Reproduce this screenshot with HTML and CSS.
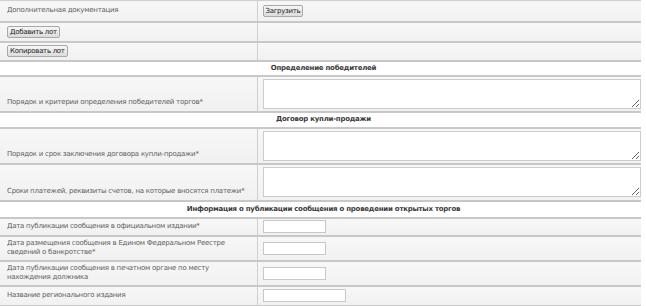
FILE: index.html
```html
<!DOCTYPE html>
<html lang="ru">
<head>
<meta charset="utf-8">
<title>Лот</title>
<link rel="stylesheet" href="styles.css">
</head>
<body>
<table class="form">
  <colgroup><col class="c-label"><col class="c-field"></colgroup>
  <tr class="row h21">
    <td class="label mid">Дополнительная документация</td>
    <td class="field mid"><button class="btn">Загрузить</button></td>
  </tr>
  <tr class="row h20">
    <td class="label mid"><button class="btn">Добавить лот</button></td>
    <td class="field"></td>
  </tr>
  <tr class="row h19">
    <td class="label mid"><button class="btn">Копировать лот</button></td>
    <td class="field"></td>
  </tr>
  <tr class="head h15"><td colspan="2">Определение победителей</td></tr>
  <tr class="row h36">
    <td class="label">Порядок и критерии определения победителей торгов*</td>
    <td class="field top"><textarea class="area"></textarea></td>
  </tr>
  <tr class="head h16"><td colspan="2">Договор купли-продажи</td></tr>
  <tr class="row h36">
    <td class="label">Порядок и срок заключения договора купли-продажи*</td>
    <td class="field top"><textarea class="area"></textarea></td>
  </tr>
  <tr class="row h37">
    <td class="label">Сроки платежей, реквизиты счетов, на которые вносятся платежи*</td>
    <td class="field top"><textarea class="area"></textarea></td>
  </tr>
  <tr class="head h17"><td colspan="2">Информация о публикации сообщения о проведении открытых торгов</td></tr>
  <tr class="row h18">
    <td class="label mid">Дата публикации сообщения в официальном издании*</td>
    <td class="field mid"><input class="inp" type="text"></td>
  </tr>
  <tr class="row h25">
    <td class="label mid narrow">Дата размещения сообщения в Едином Федеральном Реестре сведений о банкротстве*</td>
    <td class="field mid"><input class="inp" type="text"></td>
  </tr>
  <tr class="row h25">
    <td class="label mid narrow">Дата публикации сообщения в печатном органе по месту нахождения должника</td>
    <td class="field mid"><input class="inp" type="text"></td>
  </tr>
  <tr class="row h20">
    <td class="label mid">Название регионального издания</td>
    <td class="field mid"><input class="inp wide" type="text"></td>
  </tr>
</table>
</body>
</html>
```

FILE: styles.css
```css
html, body {
  margin: 0;
  padding: 0;
  background: #ffffff;
}
body {
  font-family: "DejaVu Sans", Verdana, sans-serif;
  font-size: 7px;
  letter-spacing: -0.25px;
  color: #606060;
}
.form {
  width: 641px;
  border-collapse: collapse;
  table-layout: fixed;
  border-top: 1px solid #d0d0d0;
}
.c-label { width: 257px; }
.form td {
  padding: 0;
  border-bottom: 2px solid #c8c8c8;
  line-height: 9px;
}
.row td {
  background: linear-gradient(#f7f7f7, #f1f1f1);
}
.row .label {
  border-right: 1px solid #cfcfcf;
  padding: 0 3px 4px 7px;
  vertical-align: bottom;
}
.row .label.mid {
  vertical-align: middle;
  padding-bottom: 0;
}
.row .label.narrow {
  padding-right: 26px;
}
.row .field {
  padding: 0 6px 0 5px;
  vertical-align: middle;
}
.row .field.top {
  vertical-align: top;
  padding-top: 2px;
}
.head td {
  background: #ffffff;
  text-align: center;
  font-weight: bold;
  color: #3a3a3a;
  vertical-align: middle;
  padding-left: 6px;
}
.h15 { height: 15px; }
.h16 { height: 16px; }
.h17 { height: 17px; }
.h18 { height: 18px; }
.h19 { height: 19px; }
.h20 { height: 20px; }
.h21 { height: 21px; }
.h25 { height: 25px; }
.h36 { height: 36px; }
.h37 { height: 37px; }
.btn {
  font-family: "DejaVu Sans", Verdana, sans-serif;
  font-size: 7px;
  letter-spacing: -0.3px;
  color: #222;
  height: 12px;
  line-height: 10px;
  padding: 0 2px;
  border: 1px solid #a8a8a8;
  border-radius: 2px;
  background: linear-gradient(#f6f6f6, #dcdcdc);
  display: block;
}
.area {
  display: block;
  box-sizing: border-box;
  width: 378px;
  height: 30px;
  margin: 0;
  border: 1px solid #cccccc;
  background: #ffffff;
  resize: both;
}
.inp {
  display: block;
  box-sizing: border-box;
  width: 63px;
  height: 13px;
  margin: 0;
  padding: 0;
  border: 1px solid #c8c8c8;
  background: #ffffff;
}
.inp.wide { width: 83px; }
```
